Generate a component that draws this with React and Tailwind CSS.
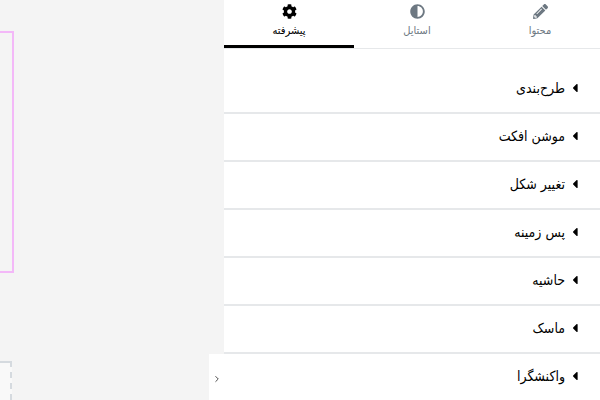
import { FaPencilAlt, FaAdjust, FaCog, FaCaretLeft } from "react-icons/fa";
import { ChevronRight } from "lucide-react";

const tabs = [
  { label: "پیشرفته", icon: FaCog, width: "w-[130px]", active: true },
  { label: "استایل", icon: FaAdjust, width: "w-[126px]" },
  { label: "محتوا", icon: FaPencilAlt, width: "w-[120px]" },
];

const sections = ["طرح‌بندی", "موشن افکت", "تغییر شکل", "پس زمینه", "حاشیه", "ماسک", "واکنشگرا"];

export default function App() {
  return (
    <div className="flex h-[400px] w-[600px] overflow-hidden bg-[#f4f4f4] font-['DejaVu_Sans',sans-serif]">
      {/* canvas */}
      <div className="relative flex w-[224px] flex-col">
        <div className="mt-[31px] h-[242px] w-[14px] border-2 border-l-0 border-[#f3b8f8]" />
        <div className="mt-[88px] h-[39px] w-[12px] border-2 border-l-0 border-b-0 border-dashed border-[#d5dadf] bg-[#f9f9f9]" />
        <div className="absolute right-0 bottom-0 flex h-[46px] w-[15px] items-center justify-center bg-white pt-[3px]">
          <ChevronRight size={10} strokeWidth={2.25} className="text-[#444]" />
        </div>
      </div>

      {/* panel */}
      <div className="flex w-[376px] flex-col bg-white">
        <div className="flex h-[49px] shrink-0 border-b border-[#e6e8ea]">
          {tabs.map((t) => (
            <div
              key={t.label}
              className={`flex h-[48px] ${t.width} flex-col items-center border-b-[3px] pt-[4px] ${
                t.active ? "border-black text-black" : "border-transparent text-[#6d7882]"
              }`}
            >
              <t.icon size={15} />
              <span dir="rtl" className="mt-[5px] text-[11px] leading-[14px] font-stretch-condensed">
                {t.label}
              </span>
            </div>
          ))}
        </div>

        <div className="mt-[17px] flex flex-col">
          {sections.map((s) => (
            <div
              key={s}
              className="flex h-[48px] shrink-0 items-center justify-end gap-[3px] border-b-2 border-[#e6e8ea] pr-[18px] pb-[2px] text-black"
            >
              <span dir="rtl" className="text-[14px] leading-[18px] font-stretch-condensed">
                {s}
              </span>
              <FaCaretLeft size={14} />
            </div>
          ))}
        </div>
      </div>
    </div>
  );
}
